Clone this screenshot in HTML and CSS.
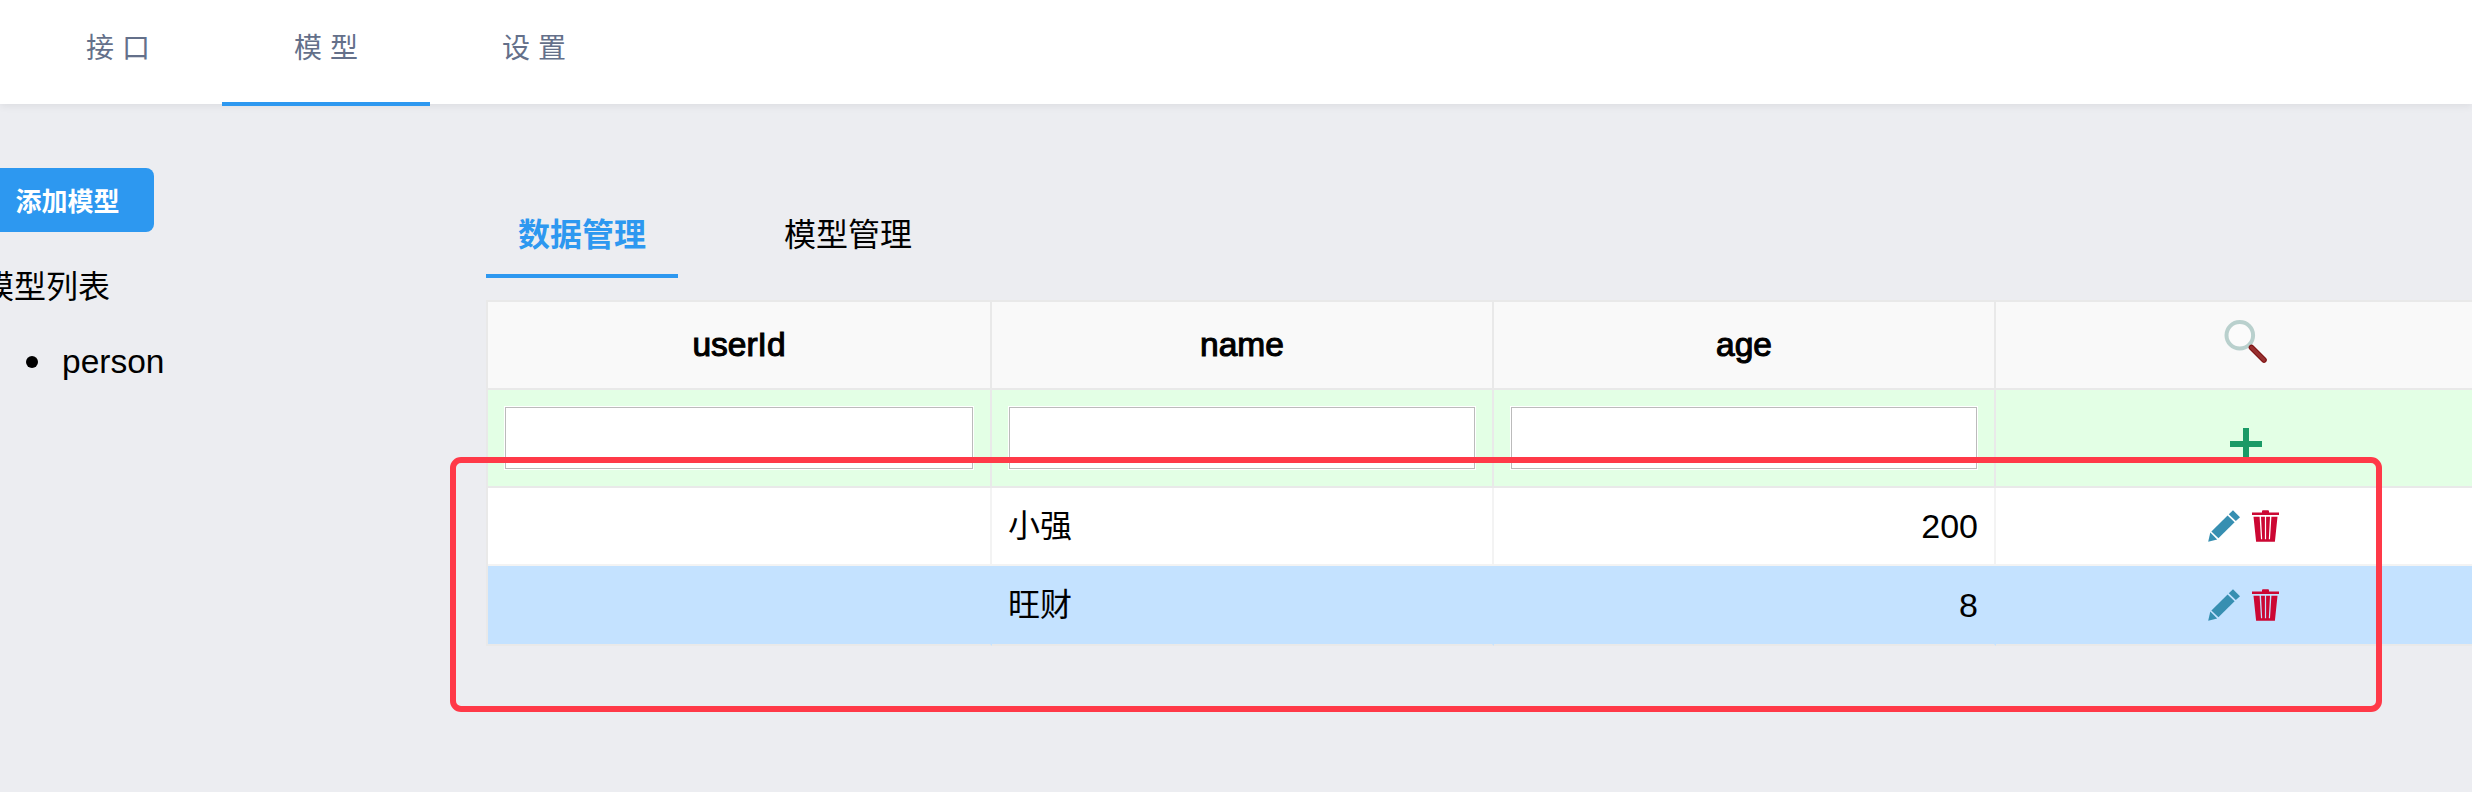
FILE: index.html
```html
<!DOCTYPE html>
<html lang="zh-CN">
<head>
<meta charset="utf-8">
<title>模型</title>
<link rel="stylesheet" href="styles.css">
</head>
<body>
<svg class="defs" aria-hidden="true">
  <symbol id="pencil" viewBox="0 0 32 32">
    <path d="M25 0.2 32 7.2 27.8 11 20.8 4.2Z"/>
    <path d="M19.6 5.4 26.6 12.2 10.4 28.2 3.4 21.4Z"/>
    <path d="M2.3 22.6 9.2 29.5 0.2 31.8Z"/>
  </symbol>
  <symbol id="trash" viewBox="0 0 27 32">
    <path d="M0 2.6H10V1.2Q10 0.3 11 0.3H16Q17 0.3 17 1.2V2.6H27V5H0Z"/>
    <path fill-rule="evenodd" d="M1.5 6.7H25.5L22.9 31.8H4.1ZM7.6 6.7 9 29.2H10.2L9 6.7ZM12.9 6.7V29.2H14.1V6.7ZM18 6.7 16.8 29.2H18L19.4 6.7Z"/>
  </symbol>
</svg>
<nav class="topnav">
  <a class="topnav-item">接 口</a>
  <a class="topnav-item active">模 型</a>
  <a class="topnav-item">设 置</a>
</nav>
<main class="layout">
  <aside class="sidebar">
    <button class="add-button">添加模型</button>
    <p class="list-title">模型列表</p>
    <ul class="model-list"><li>person</li></ul>
  </aside>
  <section class="content">
    <div class="tabs">
      <a class="tab active">数据管理</a>
      <a class="tab">模型管理</a>
    </div>
    <table class="grid">
      <colgroup><col class="first"><col><col><col></colgroup>
      <tr class="head">
        <th>userId</th><th>name</th><th>age</th>
        <th><svg class="search" viewBox="0 0 44 44"><circle cx="15.8" cy="15.3" r="13.3"/><path class="handle-edge" d="M27.5 27.5 40 40"/><path class="handle" d="M27.5 27.5 40 40"/></svg></th>
      </tr>
      <tr class="insert">
        <td><input type="text"></td><td><input type="text"></td><td><input type="text"></td>
        <td class="control"><svg class="plus" viewBox="0 0 32 32"><path d="M13 0H19V13H32V19H19V32H13V19H0V13H13Z"/></svg></td>
      </tr>
      <tr class="row">
        <td></td><td>小强</td><td class="number">200</td>
        <td class="control"><div class="actions"><svg class="edit"><use href="#pencil"/></svg><svg class="delete"><use href="#trash"/></svg></div></td>
      </tr>
      <tr class="row selected">
        <td></td><td>旺财</td><td class="number">8</td>
        <td class="control"><div class="actions"><svg class="edit"><use href="#pencil"/></svg><svg class="delete"><use href="#trash"/></svg></div></td>
      </tr>
    </table>
  </section>
</main>
<div class="highlight"></div>
</body>
</html>
```
FILE: styles.css
```css
* { box-sizing: border-box; }
html { overflow: hidden; }
body {
  margin: 0;
  width: 2472px;
  height: 792px;
  overflow: hidden;
  position: relative;
  background: #ecedf1;
  color: #000;
  font: 32px/44px "Liberation Sans", "Noto Sans CJK SC", sans-serif;
}
.defs { display: none; }
.topnav {
  display: flex;
  height: 104px;
  padding-left: 14px;
  background: #fff;
  box-shadow: 0 2px 8px rgba(0, 0, 0, .07);
}
.topnav-item {
  width: 208px;
  height: 106px;
  color: #64708a;
  font-size: 28px;
  line-height: 98px;
  text-align: center;
}
.topnav-item.active { border-bottom: 4px solid #2d98f0; }
.layout { display: flex; }
.sidebar { width: 486px; flex: none; padding-top: 64px; }
.add-button {
  display: block;
  width: 184px;
  height: 64px;
  margin-left: -30px;
  padding: 0 0 1px 11px;
  border: 0;
  border-radius: 8px;
  background: #2d98f0;
  color: #fff;
  font: 600 26px/60px "Noto Sans CJK SC", sans-serif;
}
.list-title { margin: 33px 0 0 -18px; }
.model-list {
  margin: 31px 0 0;
  padding: 0;
  list-style: none;
  font-size: 33.5px;
}
.model-list li { display: flex; align-items: center; padding-left: 26px; }
.model-list li::before {
  content: "";
  width: 12px;
  height: 12px;
  margin-right: 24px;
  border-radius: 50%;
  background: #000;
}
.content { flex: none; padding-top: 88px; }
.tabs { display: flex; gap: 74px; height: 86px; }
.tab { height: 86px; padding: 21px 32px 0; }
.tab.active { border-bottom: 4px solid #2d98f0; color: #2d98f0; font-weight: 700; }
.grid {
  width: 2012px;
  margin-top: 22px;
  table-layout: fixed;
  border-collapse: separate;
  border-spacing: 0;
  border: 2px solid #e9e9e9;
  border-width: 2px 0 0 2px;
}
.grid col { width: 502px; }
.grid col.first { width: 504px; }
.grid th, .grid td {
  padding: 0 16px;
  border: 2px solid #e9e9e9;
  border-width: 0 2px 2px 0;
}
.grid th {
  font-size: 33.5px;
  font-weight: 400;
  -webkit-text-stroke: 1.1px #000;
}
.head { height: 88px; background: #f9f9f9; }
.insert { height: 98px; background: #e3ffe5; }
.row { height: 78px; background: #fff; }
.grid .row td { border-color: #f3f3f3; }
.grid .row.selected td { border-color: #c4e2ff #c4e2ff #e9e9e9; }
.row.selected { height: 80px; background: #c4e2ff; }
.grid input {
  display: block;
  width: 100%;
  height: 64px;
  border: 1px solid #fff;
  outline: 1px solid #bbb;
  outline-offset: -2px;
  background: #fff;
}
.grid .number { text-align: right; font-size: 34px; }
.search { display: block; width: 44px; height: 44px; margin: -6px auto 0; overflow: visible; }
.search circle { fill: #fbfbfb; stroke: #b9d0cd; stroke-width: 4; }
.search path { fill: none; stroke-linecap: round; }
.handle-edge { stroke: #7f1515; stroke-width: 5.6; }
.handle { stroke: #983030; stroke-width: 3.2; }
.plus { display: block; width: 32px; height: 32px; margin: 12px auto 0; fill: #1a9a66; }
.actions { display: flex; justify-content: center; gap: 12px; padding-right: 5px; }
.edit { width: 32px; height: 32px; fill: #378fb1; }
.delete { width: 27px; height: 32px; fill: #cc0733; }
.highlight {
  position: absolute;
  left: 449.5px;
  top: 457px;
  width: 1932px;
  height: 255px;
  border: 6px solid #ff3948;
  border-radius: 11px;
}
```
